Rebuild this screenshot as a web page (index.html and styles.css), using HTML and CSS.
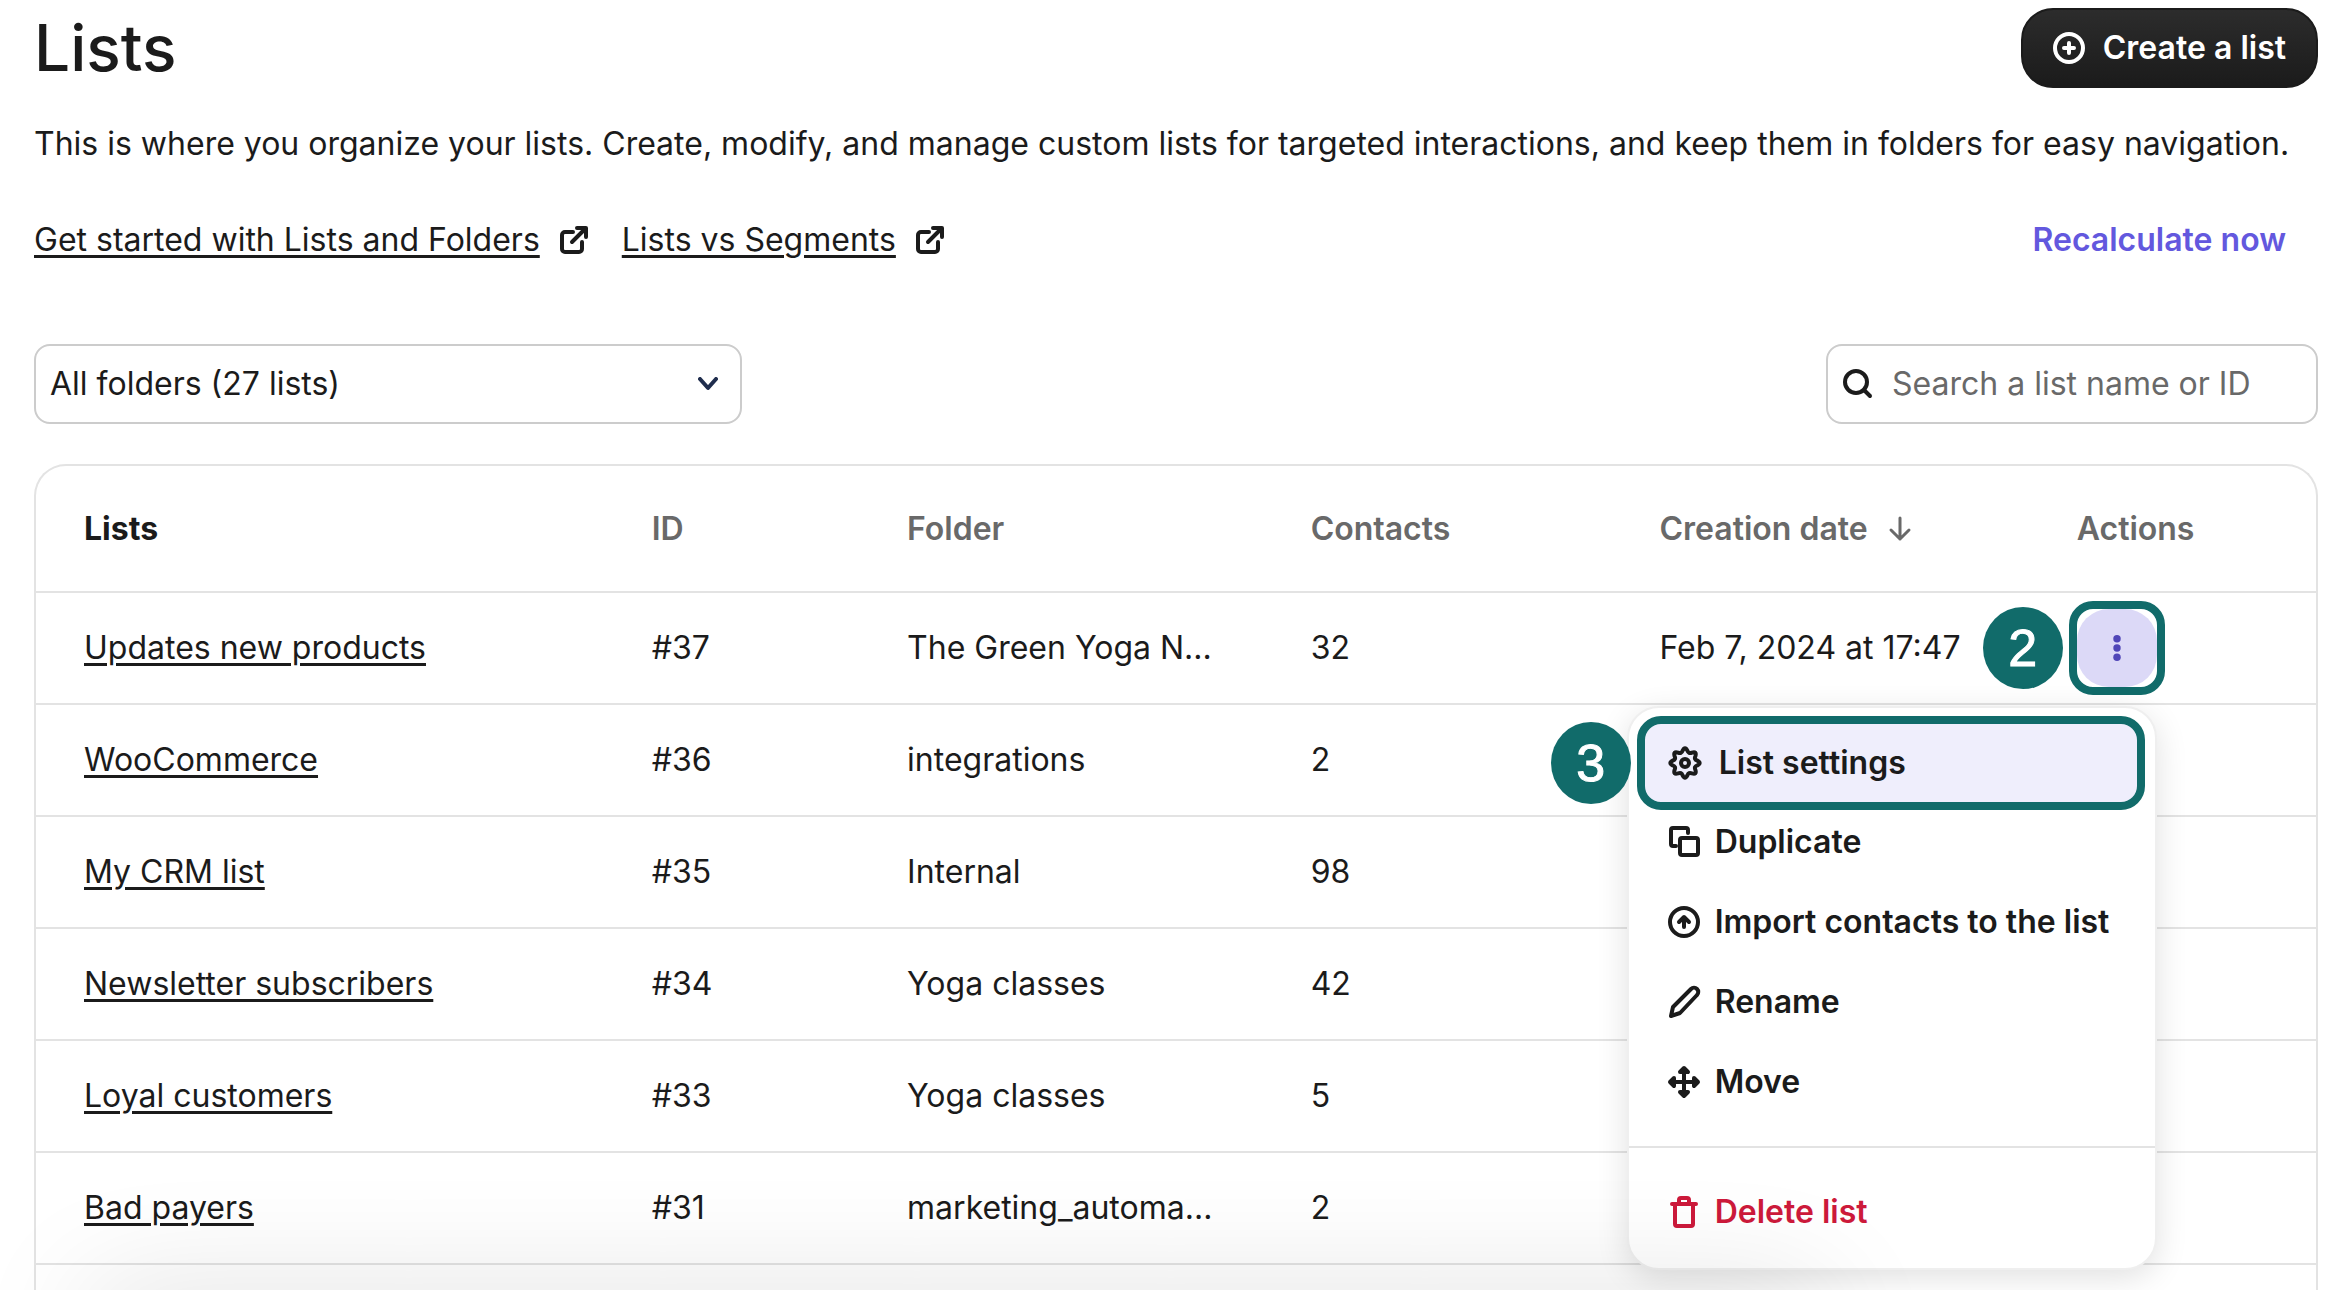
FILE: index.html
```html
<!DOCTYPE html>
<html lang="en">
<head>
<meta charset="utf-8">
<title>Lists</title>
<link rel="stylesheet" href="styles.css">
</head>
<body>
<svg class="sprite" aria-hidden="true">
  <symbol id="external" viewBox="0 0 32 32"><path d="M15 8H7a3 3 0 0 0-3 3v14a3 3 0 0 0 3 3h14a3 3 0 0 0 3-3v-7M14 18 28 4M19 4h9v9"/></symbol>
</svg>
<main class="page">
  <header class="page-header">
    <h1 class="title">Lists</h1>
    <button class="create" type="button">
      <svg class="icon" viewBox="0 0 32 32"><circle cx="16" cy="16" r="14"/><path d="M16 11v10M11 16h10"/></svg>
      Create a list
    </button>
  </header>
  <p class="intro">This is where you organize your lists. Create, modify, and manage custom lists for targeted interactions, and keep them in folders for easy navigation.</p>
  <nav class="links">
    <a class="help-link" href="#lists-and-folders"><span class="underlined">Get started with Lists and Folders</span><svg class="icon"><use href="#external"/></svg></a>
    <a class="help-link" href="#segments"><span class="underlined">Lists vs Segments</span><svg class="icon"><use href="#external"/></svg></a>
    <button class="recalculate" type="button">Recalculate now</button>
  </nav>
  <div class="filters">
    <div class="select-box">
      <select class="select" aria-label="Folder"><option>All folders (27 lists)</option></select>
      <svg class="chevron" viewBox="0 0 20 14"><path d="M2 2l8 9 8-9"/></svg>
    </div>
    <label class="search">
      <svg class="icon" viewBox="0 0 32 32"><circle cx="14" cy="14" r="11"/><path d="M22 22l6 6"/></svg>
      <input class="search-input" type="search" placeholder="Search a list name or ID" aria-label="Search a list name or ID">
    </label>
  </div>
  <div class="card">
    <table class="table">
      <colgroup><col class="col-name"><col class="col-id"><col class="col-folder"><col class="col-contacts"><col class="col-date"><col class="col-actions"></colgroup>
      <thead>
        <tr>
          <th class="first">Lists</th><th>ID</th><th>Folder</th><th>Contacts</th>
          <th><span class="sort">Creation date <svg class="sort-icon" viewBox="0 0 24 26"><path d="M12 2v21M3 14l9 9 9-9"/></svg></span></th>
          <th>Actions</th>
        </tr>
      </thead>
      <tbody>
        <tr>
          <td><a class="underlined" href="#37">Updates new products</a></td><td>#37</td><td>The Green Yoga N...</td><td>32</td><td>Feb 7, 2024 at 17:47</td>
          <td>
            <div class="actions">
              <span class="step step-two">2</span>
              <div class="ring"><button class="more" type="button" aria-label="Actions"><svg class="dots" viewBox="0 0 8 28"><circle cx="4" cy="4" r="4"/><circle cx="4" cy="14" r="4"/><circle cx="4" cy="24" r="4"/></svg></button></div>
              <div class="menu">
                <span class="step step-three">3</span>
                <button class="item item-active" type="button"><svg class="icon" viewBox="0 0 32 32"><path d="M28.3 13.6Q33 16 28.3 18.4Q24.8 19.6 26.4 22.9Q28 28 22.9 26.4Q19.6 24.8 18.4 28.3Q16 33 13.6 28.3Q12.4 24.8 9.1 26.4Q4 28 5.6 22.9Q7.2 19.6 3.7 18.4Q-1 16 3.7 13.6Q7.2 12.4 5.6 9.1Q4 4 9.1 5.6Q12.4 7.2 13.6 3.7Q16 -1 18.4 3.7Q19.6 7.2 22.9 5.6Q28 4 26.4 9.1Q24.8 12.4 28.3 13.6Z"/><circle cx="16" cy="16" r="4"/></svg>List settings</button>
                <button class="item" type="button"><svg class="icon" viewBox="0 0 32 32"><rect x="11" y="12" width="18" height="17" rx="2"/><path d="M7 20H4a2 2 0 0 1-2-2V4a2 2 0 0 1 2-2h13a2 2 0 0 1 2 2v3"/></svg>Duplicate</button>
                <button class="item" type="button"><svg class="icon" viewBox="0 0 32 32"><circle cx="15" cy="16" r="14"/><path d="M15 21V12M10 16l5-5 5 5"/></svg>Import contacts to the list</button>
                <button class="item" type="button"><svg class="icon" viewBox="0 0 32 32"><path d="M2 30l2-9L22 3a4 4 0 0 1 6 6L11 27Z"/></svg>Rename</button>
                <button class="item" type="button"><svg class="icon" viewBox="0 0 32 32"><path d="M15 2v28M1 16h28M11 6l4-4 4 4ZM11 26l4 4 4-4ZM5 12l-4 4 4 4ZM25 12l4 4-4 4Z"/></svg>Move</button>
                <div class="menu-footer"><button class="item item-danger" type="button"><svg class="icon" viewBox="0 0 32 32"><path d="M3 8h24M6 8v20a2 2 0 0 0 2 2h14a2 2 0 0 0 2-2V8M10 8V4a2 2 0 0 1 2-2h6a2 2 0 0 1 2 2v4"/></svg>Delete list</button></div>
              </div>
            </div>
          </td>
        </tr>
        <tr><td><a class="underlined" href="#36">WooCommerce</a></td><td>#36</td><td>integrations</td><td>2</td><td></td><td></td></tr>
        <tr><td><a class="underlined" href="#35">My CRM list</a></td><td>#35</td><td>Internal</td><td>98</td><td></td><td></td></tr>
        <tr><td><a class="underlined" href="#34">Newsletter subscribers</a></td><td>#34</td><td>Yoga classes</td><td>42</td><td></td><td></td></tr>
        <tr><td><a class="underlined" href="#33">Loyal customers</a></td><td>#33</td><td>Yoga classes</td><td>5</td><td></td><td></td></tr>
        <tr><td><a class="underlined" href="#31">Bad payers</a></td><td>#31</td><td>marketing_automa...</td><td>2</td><td></td><td></td></tr>
      </tbody>
    </table>
  </div>
</main>
<div class="bottom-shade"></div>
</body>
</html>
```
FILE: styles.css
```css
* { box-sizing: border-box; }
html, body { height: 100%; }
body { margin: 0; overflow: hidden; background: #fff; color: #1b1b1b; font: 400 32px/48px Inter, "Liberation Sans", sans-serif; }
button, input, select { font: inherit; color: inherit; }
button { border: 0; background: none; padding: 0; }
.sprite { position: absolute; width: 0; height: 0; }
.page { display: flex; flex-direction: column; height: 100%; padding: 8px 32px 0 34px; }
.icon { width: 32px; height: 32px; flex: none; overflow: visible; fill: none; stroke: currentColor; stroke-width: 4; stroke-linecap: round; stroke-linejoin: round; }
.underlined { color: inherit; text-decoration: underline; text-decoration-thickness: 3px; text-underline-offset: 4px; }

.page-header { display: flex; justify-content: space-between; align-items: center; height: 80px; flex: none; }
.title { margin: 0; font-size: 64px; font-weight: 500; line-height: 80px; }
.create { display: flex; align-items: center; gap: 18px; height: 80px; padding: 0 30px; border: 2px solid #1b1b1b; border-radius: 32px; background: linear-gradient(#2c2c2c, #1b1b1b); color: #fff; font-weight: 600; }
.intro { margin: 32px 0 48px; }
.links { display: flex; align-items: center; gap: 32px; }
.help-link { display: flex; align-items: center; gap: 18px; color: inherit; text-decoration: none; }
.recalculate { margin-left: auto; padding-right: 32px; color: #6358de; font-weight: 600; }

.filters { display: flex; justify-content: space-between; margin: 80px 0 40px; }
.select-box { position: relative; width: 31%; }
.select { width: 100%; height: 80px; padding: 0 14px; border: 2px solid #ccc; border-radius: 16px; background: #fff; appearance: none; }
.chevron { position: absolute; right: 24px; top: 33px; width: 20px; height: 14px; fill: none; stroke: #1f2d4d; stroke-width: 4; stroke-linecap: round; stroke-linejoin: round; pointer-events: none; }
.search { display: flex; align-items: center; gap: 18px; width: 492px; height: 80px; padding: 0 14px; border: 2px solid #ccc; border-radius: 16px; }
.search-input { flex: 1; min-width: 0; padding: 0; border: 0; outline: 0; background: none; }
.search-input::placeholder { color: #696969; opacity: 1; }

.card { flex: 1; border: 2px solid #e3e3e3; border-bottom: 0; border-radius: 32px 32px 0 0; }
.table { width: 100%; border-collapse: collapse; table-layout: fixed; }
.col-name { width: 24.9%; }
.col-id { width: 11.2%; }
.col-folder { width: 17.7%; }
.col-contacts { width: 15.3%; }
.col-date { width: 18.3%; }
th, td { padding: 0 0 0 48px; text-align: left; white-space: nowrap; border-bottom: 2px solid #e3e3e3; }
th { height: 126px; color: #696969; font-weight: 600; }
th.first { color: #1b1b1b; font-weight: 700; }
td { height: 112px; }
.sort { display: flex; align-items: center; gap: 20px; }
.sort-icon { width: 24px; height: 26px; fill: none; stroke: currentColor; stroke-width: 3; stroke-linecap: round; stroke-linejoin: round; }

.actions { position: relative; display: flex; width: 80px; height: 78px; }
.ring { flex: none; margin: -8px; width: 96px; height: 94px; border: 8px solid #116b6a; border-radius: 24px; }
.more { display: grid; place-items: center; width: 80px; height: 78px; border-radius: 32px; background: #dcd9f7; color: #5046b8; }
.dots { width: 8px; height: 26px; fill: currentColor; }
.step { position: absolute; width: 80px; height: 82px; border-radius: 50%; background: #116b6a; color: #fff; font: 500 52px/82px "Liberation Sans", sans-serif; -webkit-text-stroke: 1px #fff; text-align: center; }
.step-two { right: 94px; top: -2px; }
.step-three { right: 524px; top: 14px; }
.menu { position: absolute; z-index: 1; top: 97px; right: 0; width: 530px; border: 2px solid #efefef; border-radius: 32px; padding: 8px 0 16px; background: #fff; box-shadow: 0 8px 32px rgba(0, 0, 0, .12); }
.item { display: flex; align-items: center; gap: 14px; width: 100%; height: 80px; padding: 0 40px; font-weight: 600; }
.item-active { gap: 18px; width: 508px; height: 94px; margin: 0 8px -8px; padding: 0 24px; border: 8px solid #116b6a; border-radius: 24px; background: #efeefc; }
.item-danger { color: #cd1a3b; }
.menu-footer { margin-top: 24px; padding-top: 24px; border-top: 2px solid #e3e3e3; }
.bottom-shade { position: fixed; z-index: 2; left: 100px; right: 540px; bottom: -60px; height: 40px; border-radius: 20px; box-shadow: 0 0 120px 20px rgba(0, 0, 0, .13); pointer-events: none; }
```
